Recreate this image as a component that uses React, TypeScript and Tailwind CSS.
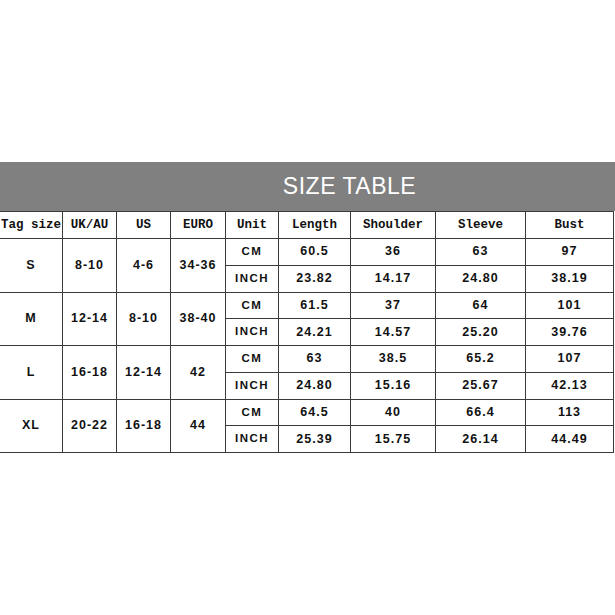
import React from "react";

type Size = {
  tag: string;
  uk: string;
  us: string;
  euro: string;
  cm: string[];
  inch: string[];
};

const sizes: Size[] = [
  { tag: "S", uk: "8-10", us: "4-6", euro: "34-36", cm: ["60.5", "36", "63", "97"], inch: ["23.82", "14.17", "24.80", "38.19"] },
  { tag: "M", uk: "12-14", us: "8-10", euro: "38-40", cm: ["61.5", "37", "64", "101"], inch: ["24.21", "14.57", "25.20", "39.76"] },
  { tag: "L", uk: "16-18", us: "12-14", euro: "42", cm: ["63", "38.5", "65.2", "107"], inch: ["24.80", "15.16", "25.67", "42.13"] },
  { tag: "XL", uk: "20-22", us: "16-18", euro: "44", cm: ["64.5", "40", "66.4", "113"], inch: ["25.39", "15.75", "26.14", "44.49"] },
];

const widths = [63, 54, 54, 55, 53, 72, 85, 90, 88];
const heads = ["Tag size", "UK/AU", "US", "EURO", "Unit", "Length", "Shoulder", "Sleeve", "Bust"];

const cell = "border border-[#3a3a3a] text-center align-middle p-0";
const num = "font-['Liberation_Sans',sans-serif] font-bold text-[12.5px] tracking-[1px] text-[#111]";
const unit = "font-['Liberation_Sans',sans-serif] font-black text-[11.5px] tracking-[1.5px] text-[#111]";

export default function App() {
  return (
    <div className="w-[615px] h-[615px] bg-white overflow-hidden">
      <div className="mt-[162px] h-[49px] bg-[#808080] flex items-center justify-center pl-[84px]">
        <span className="font-['Liberation_Sans',sans-serif] text-[23px] tracking-[0.5px] text-white">SIZE TABLE</span>
      </div>
      <table className="table-fixed border-collapse w-[615px] -ml-px">
        <colgroup>
          {widths.map((w, i) => (
            <col key={i} style={{ width: w }} />
          ))}
        </colgroup>
        <tbody>
          <tr className="h-[27px]">
            {heads.map((h) => (
              <td key={h} className={`${cell} font-['Liberation_Mono',monospace] font-bold text-[12.5px] text-[#111] whitespace-nowrap`}>
                {h}
              </td>
            ))}
          </tr>
          {sizes.map((s) => (
            <React.Fragment key={s.tag}>
              <tr className="h-[26.5px]">
                <td rowSpan={2} className={`${cell} ${num}`}>{s.tag}</td>
                <td rowSpan={2} className={`${cell} ${num}`}>{s.uk}</td>
                <td rowSpan={2} className={`${cell} ${num}`}>{s.us}</td>
                <td rowSpan={2} className={`${cell} ${num}`}>{s.euro}</td>
                <td className={`${cell} ${unit}`}>CM</td>
                {s.cm.map((v, i) => (
                  <td key={i} className={`${cell} ${num}`}>{v}</td>
                ))}
              </tr>
              <tr className="h-[27px]">
                <td className={`${cell} ${unit}`}>INCH</td>
                {s.inch.map((v, i) => (
                  <td key={i} className={`${cell} ${num}`}>{v}</td>
                ))}
              </tr>
            </React.Fragment>
          ))}
        </tbody>
      </table>
    </div>
  );
}
